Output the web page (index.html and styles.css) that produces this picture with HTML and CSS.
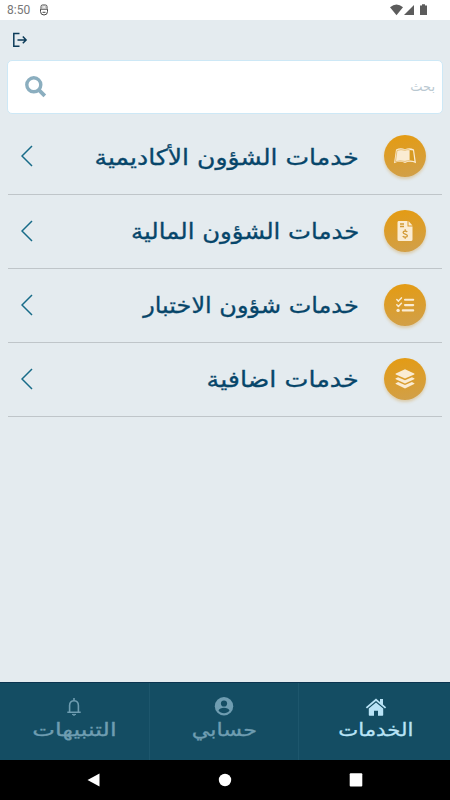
FILE: index.html
```
<!DOCTYPE html>
<html lang="ar" dir="rtl">
<head>
    <meta charset="UTF-8">
    <meta name="viewport" content="width=device-width, initial-scale=1.0">
    <title>الخدمات</title>
    <link rel="stylesheet" href="styles.css">
</head>
<body>
    <div class="status-bar" dir="ltr">
        <span class="clock">8:50</span>
        <svg class="debug-icon" viewBox="0 0 10 12" fill="none" stroke="#444" stroke-width="1">
            <path d="M2 4.500V2.500Q2 1 3.500 1h3Q8 1 8 2.500v2M1 5.200h8M1.500 5.500v2a3.500 3.500 0 0 0 7 0v-2M3.500 3h.8M5.800 3h.8M3.500 8.300h3"/>
        </svg>
        <svg class="signal-icons" viewBox="0 0 38 12" fill="#5c5c5c">
            <path d="M0 3.200Q6.500-2.200 13 3.200L6.500 11.200z"/>
            <path d="M24 1v10H14z"/>
            <path d="M30 1.500h2V.3h3v1.200h2V11h-7z"/>
        </svg>
    </div>

    <header class="toolbar">
        <svg class="logout" viewBox="0 0 16 16" fill="none" stroke="#0b3a58" stroke-width="1.500">
            <path d="M7.500 1.500H1.800v12.800h5.700M5.500 7.900h8.500M10.800 4.500l3.300 3.400-3.300 3.400"/>
        </svg>
    </header>

    <form class="search">
        <input type="text" class="search-input" placeholder="بحث">
        <svg class="search-icon" viewBox="0 0 22 22" fill="none" stroke="#8baebf">
            <circle cx="8.800" cy="8.800" r="7" stroke-width="3.400"/>
            <path d="M13.800 13.800l6 6" stroke-width="3.800"/>
        </svg>
    </form>

    <ul class="services">
        <li class="service">
            <span class="badge">
                <svg viewBox="0 0 22 16">
                    <path fill="#faecd3" d="M2 1.500Q6.500-.8 11 1.200 15.500-.8 20 1.500L22 15.300Q16 12.600 11 15 6 12.600 0 15.300z"/>
                    <path fill="#d79a22" d="M15.600 1.900Q17.500 1.900 19 2.500L20.400 13.200Q18 12.400 15.600 12.600z"/>
                    <path fill="none" stroke="#dda53c" stroke-width=".6" d="M3 2.500Q7 1 11 2.300 13 1.500 15.600 1.800M1.500 13.600Q6 12.100 11 13.400 13 12.600 15.600 12.600M3 2.500L1.500 13.600"/>
                </svg>
            </span>
            <span class="title title-academic">خدمات الشؤون الأكاديمية</span>
            <svg class="chevron" viewBox="0 0 12 22"><path d="M11 1L1 11l10 10"/></svg>
        </li>
        <li class="service">
            <span class="badge">
                <svg viewBox="0 0 22 22">
                    <path fill="#faecd3" d="M4.500 1h9v5.500h5V19.500a1.500 1.500 0 0 1-1.500 1.500h-12a1.500 1.500 0 0 1-1.500-1.500V2.500A1.500 1.500 0 0 1 4.500 1zM14.500 1l4 4.500h-4z"/>
                    <path fill="none" stroke="#d29a35" stroke-width="1.300" d="M6 4h4M6 6.500h4M13.200 12c-.6-1.100-4.100-1.200-4.100.6 0 1.900 4.300 1.100 4.300 3.100 0 1.900-3.800 1.800-4.600.4M11.200 9.300v1.800M11.200 17v1.800"/>
                </svg>
            </span>
            <span class="title title-finance">خدمات الشؤون المالية</span>
            <svg class="chevron" viewBox="0 0 12 22"><path d="M11 1L1 11l10 10"/></svg>
        </li>
        <li class="service">
            <span class="badge">
                <svg viewBox="0 0 22 18" fill="none" stroke="#faecd3" stroke-linecap="round" stroke-linejoin="round">
                    <path stroke-width="1.500" d="M2.800 3.500l1.600 1.600 3-3.200M2.800 8.800l1.600 1.600 3-3.200"/>
                    <path stroke-width="2.100" d="M11 3.700h8.200M11 9.100h8.200M8.800 14.400h10.400"/>
                    <circle cx="4.100" cy="14.400" r="1.700" fill="#faecd3" stroke="none"/>
                </svg>
            </span>
            <span class="title title-exams">خدمات شؤون الاختبار</span>
            <svg class="chevron" viewBox="0 0 12 22"><path d="M11 1L1 11l10 10"/></svg>
        </li>
        <li class="service">
            <span class="badge">
                <svg class="layers" viewBox="0 0 20 20" fill="#faecd3">
                    <path d="M10 .3l9.200 4.200q.7.400 0 .9L10 9.500.8 5.400q-.7-.5 0-.9z"/>
                    <path d="M.8 9.300l2.300-1.100 6.900 3 6.900-3 2.300 1.100q.7.400 0 .9L10 14.400.8 10.200q-.7-.5 0-.9z"/>
                    <path d="M.8 14.200l2.300-1.100 6.900 3 6.900-3 2.300 1.100q.7.400 0 .9L10 19.500.8 15.100q-.7-.5 0-.9z"/>
                </svg>
            </span>
            <span class="title title-extra">خدمات اضافية</span>
            <svg class="chevron" viewBox="0 0 12 22"><path d="M11 1L1 11l10 10"/></svg>
        </li>
    </ul>

    <nav class="tabs">
        <a class="tab active">
            <svg viewBox="0 0 22 20" fill="currentColor">
                <path d="M11 1.500L.8 10.200l1.200 1.400L11 4l9 7.600 1.200-1.400-3.200-2.800V2h-3v2.900z"/>
                <path d="M11 5.500l-7.200 6V18q0 .7.700.7H9v-5h4v5h4.500q.7 0 .7-.7v-6.500z"/>
            </svg>
            <span class="tab-home">الخدمات</span>
        </a>
        <a class="tab">
            <svg viewBox="0 0 22 20">
                <circle cx="11" cy="9.300" r="9.200" fill="currentColor"/>
                <circle cx="11" cy="6.500" r="3.100" fill="#144d63"/>
                <path d="M5.500 13.600c1.300-3.800 9.700-3.800 11 0-2.400 3.600-8.600 3.600-11 0z" fill="#144d63"/>
            </svg>
            <span class="tab-account">حسابي</span>
        </a>
        <a class="tab">
            <svg viewBox="0 0 22 20" fill="none" stroke="currentColor" stroke-width="1.600">
                <path d="M4.300 15.200h13.400M6.600 15V8.600c0-6.500 8.800-6.500 8.800 0V15M11 1v2.500"/>
                <path d="M9.200 17.400h3.600l-1.800 1z" stroke-width="1"/>
            </svg>
            <span class="tab-alerts">التنبيهات</span>
        </a>
    </nav>

    <div class="system-nav" dir="ltr">
        <svg viewBox="0 0 14 14" fill="#fff"><path d="M.5 7L12.500.5v13z"/></svg>
        <svg viewBox="0 0 14 14" fill="#fff"><circle cx="7" cy="7" r="6.200"/></svg>
        <svg viewBox="0 0 14 14" fill="#fff"><rect x=".7" y=".3" width="12.600" height="13.200" rx="1"/></svg>
    </div>
</body>
</html>
```
FILE: styles.css
```
* {
    box-sizing: border-box;
}
body {
    margin: 0;
    height: 100vh;
    display: flex;
    flex-direction: column;
    overflow: hidden;
    background-color: #e4ebef;
    color: #07466a;
    font-family: "DejaVu Sans", sans-serif;
}
.status-bar {
    display: flex;
    align-items: center;
    height: 20px;
    padding: 0 22px 0 7px;
    background-color: #fff;
}
.clock {
    font-family: Roboto, sans-serif;
    font-size: 12px;
    color: #777;
}
.debug-icon {
    width: 10px;
    height: 12px;
    margin-left: 9px;
}
.signal-icons {
    width: 38px;
    height: 12px;
    margin-left: auto;
}
.toolbar {
    display: flex;
    justify-content: flex-end;
    height: 40px;
    padding: 12px 12px 0;
}
.logout {
    width: 16px;
    height: 16px;
}
.search {
    display: flex;
    align-items: center;
    height: 54px;
    margin: 0 7px 6px;
    padding: 0 7px 0 17px;
    background-color: #fff;
    border: 1px solid #cde8f6;
    border-radius: 5px;
}
.search-input {
    flex: 1;
    border: none;
    outline: none;
    padding: 0 0 2px;
    font-family: "DejaVu Sans", sans-serif;
    font-size: 13px;
}
.search-input::placeholder {
    color: #b9c8d1;
}
.search-icon {
    width: 22px;
    height: 22px;
}
.services {
    flex: 1;
    list-style: none;
    margin: 0 8px;
    padding: 0;
}
.service {
    display: flex;
    align-items: center;
    height: 74px;
    padding: 0 16px 2px 13px;
    border-bottom: 1px solid #bfc5c9;
}
.service:first-child {
    height: 75px;
}
.badge {
    display: flex;
    align-items: center;
    justify-content: center;
    width: 42px;
    height: 42px;
    border-radius: 50%;
    background: linear-gradient(170deg, #e59b10, #d0a04c);
    box-shadow: 0 2px 3px rgba(208, 160, 76, 0.4);
}
.badge svg {
    width: 22px;
    height: 22px;
}
.badge .layers {
    width: 20px;
    height: 20px;
}
.title {
    margin-right: 25px;
    padding-top: 2px;
    font-size: 22px;
    white-space: nowrap;
    -webkit-text-stroke: 0.3px #07466a;
    transform-origin: right center;
}
/* widen the letterforms */
.title-academic {
    transform: scaleX(1.14);
}
.title-finance {
    transform: scaleX(1.107);
}
.title-exams {
    transform: scaleX(1.09);
}
.title-extra {
    transform: scaleX(1.155);
}
.chevron {
    width: 12px;
    height: 22px;
    margin-right: auto;
    fill: none;
    stroke: #176b88;
    stroke-width: 1.5;
}
.tabs {
    display: flex;
    height: 78px;
    background-color: #144d63;
    border-top: 1px solid #0b3450;
}
.tab {
    flex: 1;
    display: flex;
    flex-direction: column;
    align-items: center;
    padding-top: 14px;
    color: #6f9db1;
    font-size: 18px;
    line-height: 26px;
    white-space: nowrap;
    -webkit-text-stroke: 0.3px currentColor;
}
.tab + .tab {
    border-right: 1px solid #1d566c;
}
.tab svg {
    width: 22px;
    height: 20px;
}
.tab.active {
    padding-left: 2px;
    color: #b9e3f6;
}
.tab-home {
    transform: scaleX(1.18);
}
.tab-account {
    transform: scaleX(1.24);
}
.tab-alerts {
    transform: scaleX(1.34);
}
.system-nav {
    display: flex;
    align-items: center;
    justify-content: center;
    gap: 117px;
    height: 40px;
    background-color: #000;
}
.system-nav svg {
    width: 14px;
    height: 14px;
}
```
